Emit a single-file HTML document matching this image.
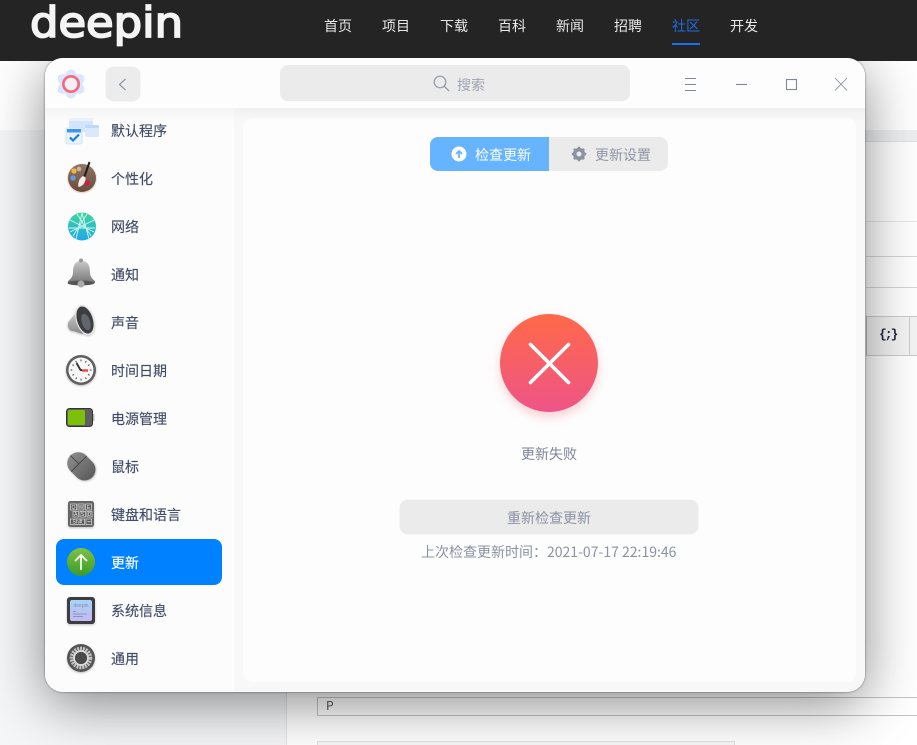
<!DOCTYPE html>
<html><head><meta charset="utf-8"><style>
html,body{margin:0;padding:0;width:917px;height:745px;overflow:hidden;background:#fff;font-family:"Noto Sans CJK SC","Liberation Sans",sans-serif}
div,span,svg{position:absolute}
.nav{top:16px;width:29px;font-size:14px;line-height:20px;color:#e8e8e8;white-space:nowrap}
.it{left:111px;font-size:14px;line-height:20px;color:#414d68;white-space:nowrap;-webkit-text-stroke:.15px #414d68}
</style></head><body>
<div style="position:absolute;left:0;top:0;width:917px;height:745px;overflow:hidden">
<!-- page behind -->
<div style="left:0;top:61px;width:917px;height:69px;background:#fff"></div>
<div style="left:0;top:130px;width:286px;height:615px;background:#f5f6f8;border-right:1px solid #e3e5e8"></div>
<div style="left:287px;top:130px;width:630px;height:11px;background:#eff0f2;border-bottom:1px solid #dfe1e5"></div>
<div style="left:866px;top:221px;width:51px;height:1px;background:#e6e6e6"></div>
<div style="left:866px;top:256px;width:51px;height:1px;background:#d6d6d6"></div>
<div style="left:866px;top:287px;width:51px;height:1px;background:#d6d6d6"></div>
<div style="left:866px;top:316px;width:51px;height:38px;background:#f4f4f4;border-top:1px solid #ccc;border-bottom:1px solid #ccc"></div>
<div style="left:866px;top:316px;width:1px;height:39px;background:#bbb"></div>
<div style="left:909px;top:316px;width:1px;height:39px;background:#ccc"></div>
<div style="left:879px;top:327px;font:bold 13px/16px 'Liberation Mono',monospace;letter-spacing:-2px;color:#1f2a3d">{;}</div>
<div style="left:317px;top:697px;width:600px;height:17px;border:1px solid #c4c4c4;border-right:0;background:#fff"></div>
<div style="left:326px;top:698px;font-size:12px;line-height:15px;color:#555">P</div>
<div style="left:317px;top:741px;width:416px;height:6px;border:1px solid #e0e2e6;background:#f8f8f8"></div>
<!-- shadow -->
<div style="left:45px;top:58px;width:820px;height:634px;border-radius:18px;box-shadow:0 12px 56px rgba(0,0,0,.46),0 0 2px rgba(0,0,0,.5)"></div>
<!-- header -->
<div style="left:0;top:0;width:917px;height:61px;background:#242424"></div>
<svg style="left:0;top:0" width="220" height="61"><text x="30" y="37" font-family="DejaVu Sans" font-size="42" fill="#f4f4f4" stroke="#f4f4f4" stroke-width="1.800" textLength="153" lengthAdjust="spacingAndGlyphs">deepin</text></svg>
<span class="nav" style="left:324px">首页</span><span class="nav" style="left:382px">项目</span><span class="nav" style="left:440px">下载</span><span class="nav" style="left:498px">百科</span><span class="nav" style="left:556px">新闻</span><span class="nav" style="left:614px">招聘</span><span class="nav" style="left:672px;color:#1d6fe0">社区</span><span class="nav" style="left:730px">开发</span>
<div style="left:672px;top:43px;width:28px;height:2px;background:#1a6ff0"></div>
<!-- window -->
<div style="left:45px;top:58px;width:820px;height:634px;border-radius:18px;background:#f8f8f8;overflow:hidden">
 <div style="left:0;top:50px;width:189px;height:584px;background:#fcfcfc"></div>
 <div style="left:198px;top:60px;width:613px;height:564px;background:#fdfdfd;border-radius:10px"></div>
 <div style="left:0;top:50px;width:820px;height:14px;background:linear-gradient(rgba(0,0,0,.03),rgba(0,0,0,0))"></div>
 <div style="left:0;top:0;width:820px;height:50px;background:#fdfdfd"></div>
</div>
<!-- title bar -->
<svg style="left:56px;top:69px" width="30" height="30" viewBox="0 0 30 30"><g fill="#d8e7fb"><circle cx="15" cy="15" r="11.500"/><circle cx="15" cy="5.500" r="5"/><circle cx="15" cy="24.500" r="5"/><circle cx="6.500" cy="10" r="5"/><circle cx="23.500" cy="10" r="5"/><circle cx="6.500" cy="20" r="5"/><circle cx="23.500" cy="20" r="5"/></g><circle cx="15" cy="15" r="8" fill="#f4eff4"/><circle cx="15" cy="15" r="7.700" fill="none" stroke="#f7677f" stroke-width="2.700"/></svg>
<div style="left:106px;top:67px;width:34px;height:34px;background:#ececec;border-radius:8px;box-shadow:0 0 1px rgba(0,0,0,.2)"></div>
<svg style="left:106px;top:67px" width="34" height="34"><path d="M19.500 12L13.500 17.500l6 5.500" fill="none" stroke="#7b8498" stroke-width="1"/></svg>
<div style="left:280px;top:65px;width:350px;height:36px;background:#ebebeb;border-radius:8px"></div>
<svg style="left:432px;top:74px" width="20" height="20"><circle cx="8" cy="8" r="5.800" fill="none" stroke="#9299a8" stroke-width="1.200"/><path d="M12.300 12.300l4.700 4.700" stroke="#9299a8" stroke-width="1.300"/></svg>
<span style="left:457px;top:75px;font-size:14px;line-height:20px;color:#9ea4b2">搜索</span>
<svg style="left:680px;top:74px" width="170" height="20" fill="none" stroke="#7f8798" stroke-width="1"><path d="M5 4.500h11M5 10.500h11M5 16.500h11" stroke-width=".9"/><path d="M56 10.500h11" stroke-width="1.100"/><rect x="106.500" y="5.500" width="10" height="10" stroke-width="1.100"/><path d="M155 4l12 12.500M167 4l-12 12.500" stroke-width=".8"/></svg>
<!-- tabs -->
<div style="left:430px;top:137px;width:119px;height:34px;background:#66b3ff;border-radius:8px 0 0 8px"></div>
<div style="left:549px;top:137px;width:119px;height:34px;background:#ebebeb;border-radius:0 8px 8px 0"></div>
<svg style="left:451px;top:146px" width="16" height="16"><circle cx="8" cy="8" r="7.500" fill="#fff"/><path d="M8 12V5M5 8l3-3 3 3" fill="none" stroke="#66b3ff" stroke-width="1.800"/></svg>
<span style="left:475px;top:145px;font-size:14px;line-height:20px;color:#fff">检查更新</span>
<svg style="left:571px;top:146px" width="16" height="16" viewBox="0 0 16 16"><circle cx="8" cy="8" r="4.300" fill="none" stroke="#8b92a3" stroke-width="3.600"/><path d="M8 .8v3M8 12.200v3M.8 8h3M12.200 8h3M2.900 2.900l2 2M11.100 11.100l2 2M13.100 2.900l-2 2M4.900 11.100l-2 2" stroke="#8b92a3" stroke-width="2.400"/></svg>
<span style="left:595px;top:145px;font-size:14px;line-height:20px;color:#8f96a6">更新设置</span>
<!-- failure -->
<div style="left:500px;top:314px;width:98px;height:98px;border-radius:50%;background:linear-gradient(#ff6948,#ee5488);box-shadow:0 5px 10px rgba(240,80,90,.25)"></div>
<svg style="left:500px;top:314px" width="98" height="98"><path d="M30.500 30.500l38 38M68.500 30.500l-38 38" stroke="#fff" stroke-width="3.600" stroke-linecap="round"/></svg>
<span style="left:521px;top:444px;font-size:14px;line-height:20px;color:#7d8596">更新失败</span>
<div style="left:400px;top:500px;width:298px;height:34px;background:#ebebeb;border-radius:8px;box-shadow:0 0 1px rgba(0,0,0,.2)"></div>
<span style="left:507px;top:508px;font-size:14px;line-height:20px;color:#8a92a3">重新检查更新</span>
<span style="left:421px;top:542px;font-size:14px;line-height:20px;color:#8a92a3;white-space:nowrap">上次检查更新时间：2021-07-17 22:19:46</span>
<!-- sidebar -->
<div style="left:56px;top:539px;width:166px;height:46px;background:#0081ff;border-radius:8px"></div>
<span class="it" style="top:121px">默认程序</span>
<span class="it" style="top:169px">个性化</span>
<span class="it" style="top:217px">网络</span>
<span class="it" style="top:265px">通知</span>
<span class="it" style="top:313px">声音</span>
<span class="it" style="top:361px">时间日期</span>
<span class="it" style="top:409px">电源管理</span>
<span class="it" style="top:457px">鼠标</span>
<span class="it" style="top:505px">键盘和语言</span>
<span class="it" style="top:553px;color:#fff;-webkit-text-stroke:.15px #fff">更新</span>
<span class="it" style="top:601px">系统信息</span>
<span class="it" style="top:649px">通用</span>
<svg style="left:60px;top:112px" width="44" height="570" viewBox="0 0 44 570">
 <defs>
  <linearGradient id="g1" x1="0" y1="0" x2="0" y2="1"><stop offset="0" stop-color="#3fd69a"/><stop offset="1" stop-color="#1fa8e8"/></linearGradient>
  <linearGradient id="g2" x1="0" y1="0" x2="0" y2="1"><stop offset="0" stop-color="#c8c8c8"/><stop offset="1" stop-color="#777"/></linearGradient>
  <linearGradient id="g3" x1="0" y1="0" x2="0" y2="1"><stop offset="0" stop-color="#7fc241"/><stop offset="1" stop-color="#3b9a2a"/></linearGradient>
  <linearGradient id="g4" x1="0" y1="0" x2="0" y2="1"><stop offset="0" stop-color="#a5d4f5"/><stop offset="1" stop-color="#c6b9f2"/></linearGradient>
  <linearGradient id="g5" x1="0" y1="0" x2="0" y2="1"><stop offset="0" stop-color="#8a8a8a"/><stop offset="1" stop-color="#5c5c5c"/></linearGradient>
  <linearGradient id="g6" x1="0" y1="0" x2="0" y2="1"><stop offset="0" stop-color="#8f7665"/><stop offset="1" stop-color="#6b4a3a"/></linearGradient>
  <linearGradient id="g7" x1="0" y1="0" x2="0" y2="1"><stop offset="0" stop-color="#d8d8d8"/><stop offset="1" stop-color="#888"/></linearGradient>
  <filter id="sh" x="-20%" y="-20%" width="140%" height="150%"><feDropShadow dx="0" dy="1" stdDeviation="1" flood-color="#000" flood-opacity=".25"/></filter>
 </defs>
 <!-- default apps -->
 <rect x="9" y="6" width="24" height="14" rx="1.500" fill="#d2e5fb"/><rect x="9" y="6" width="24" height="3" fill="#e8f1fc"/>
 <rect x="25" y="13" width="14" height="12" rx="2" fill="#d9e9fb"/><rect x="25" y="13" width="14" height="3" rx="1" fill="#bcd9f8"/>
 <rect x="6" y="16" width="16" height="16" rx="2" fill="#eaf3fd" stroke="#d0e3fa"/><rect x="7" y="17" width="14" height="3.500" fill="#3d97f0"/>
 <path d="M10 25.500l3 3 6-6" fill="none" stroke="#1a7ae6" stroke-width="2.200"/>
 <!-- palette -->
 <circle cx="22" cy="66.500" r="15" fill="#e8c8b8" opacity=".6"/><circle cx="22" cy="66" r="14" fill="url(#g6)"/>
 <circle cx="14" cy="59" r="2.700" fill="#f0b53c"/><circle cx="13" cy="66" r="2.700" fill="#5b9fe0"/><circle cx="19" cy="57" r="2.300" fill="#c9b5a5"/><circle cx="27" cy="71" r="2.500" fill="#d8143f"/>
 <path d="M18.500 75c-1-4 1-9 4.500-11l2.500 1.500c.5 4-2 8.500-7 9.500z" fill="#f4efe8"/><path d="M24.500 64.500L29.500 50" stroke="#1d1d1d" stroke-width="2"/>
 <!-- network -->
 <circle cx="22" cy="114.500" r="14" fill="url(#g1)"/><path d="M22 101l-6 26M22 101l7 26M10 108l24 12M34 108l-24 12M9 116h26M13 124l14-22M31 124L17 102" stroke="#e8fff6" stroke-width=".9" fill="none" opacity=".9"/>
 <!-- bell -->
 <path d="M21 149c-6 0-8 5-8 11 0 4-2 7-5 9v2h27v-2c-3-2-5-5-5-9 0-6-2-11-8-11z" fill="url(#g2)"/><circle cx="21" cy="148.500" r="2" fill="#999"/><ellipse cx="21" cy="171" rx="13.500" ry="2.500" fill="#555"/><circle cx="21" cy="172" r="3.500" fill="#aaa"/>
 <!-- speaker -->
 <g filter="url(#sh)"><path d="M19 197L10 208a5 6 0 0 0 3 11l10 3z" fill="url(#g7)"/><ellipse cx="25" cy="208" rx="9" ry="15.500" transform="rotate(-18 25 208)" fill="#e2e2e2"/><ellipse cx="25" cy="208" rx="7.800" ry="14" transform="rotate(-18 25 208)" fill="#3a3d40"/><ellipse cx="26" cy="210" rx="4.200" ry="8.500" transform="rotate(-18 26 210)" fill="#62666b"/></g>
 <!-- clock -->
 <g filter="url(#sh)"><circle cx="21" cy="258" r="15" fill="#5e5e5e"/><circle cx="21" cy="258" r="12.500" fill="#f7f7f7"/></g>
 <path d="M21 247.500v1.800M21 266.700v1.800M10.500 258h1.800M29.700 258h1.800M15.700 249l.9 1.500M26.300 249l-.9 1.500M15.700 267l.9-1.500M26.300 267l-.9-1.500M12.500 252.700l1.500.9M29.500 252.700l-1.500.9M12.500 263.300l1.500-.9M29.500 263.300l-1.500-.9" stroke="#444" stroke-width="1"/>
 <path d="M16.500 251l4 7" stroke="#333" stroke-width="1.800"/><path d="M20 258h2" stroke="#333" stroke-width="2"/><path d="M22 258.500h6" stroke="#ee4444" stroke-width="2.400"/>
 <!-- battery -->
 <rect x="6.500" y="296.500" width="26" height="18" rx="3" fill="#5f5f5f" stroke="#333"/><rect x="8" y="298" width="17" height="15" rx="1.500" fill="#7cc00a"/><rect x="33" y="302" width="1.500" height="7" fill="#bbb"/>
 <!-- mouse -->
 <g transform="rotate(-45 21 354)" filter="url(#sh)"><rect x="10" y="339" width="22" height="31" rx="11" fill="url(#g5)"/><path d="M10 351h22M21 339v12" stroke="#444" stroke-width="1"/></g>
 <!-- keyboard -->
 <rect x="8" y="389" width="26" height="26" rx="2.500" fill="#666" filter="url(#sh)"/>
 <g fill="#5a5a5a" stroke="#ddd" stroke-width=".7"><rect x="10.500" y="392" width="6" height="6"/><rect x="18" y="392" width="6" height="6"/><rect x="25.500" y="392" width="6" height="6"/><rect x="13" y="399.500" width="5.500" height="5.500"/><rect x="20" y="399.500" width="5.500" height="5.500"/><rect x="27" y="399.500" width="5" height="5.500"/><rect x="10.500" y="407" width="14" height="5.500"/><rect x="26" y="407" width="5.500" height="5.500"/></g>
 <g font-family="Liberation Sans" font-size="5" fill="#eee" text-anchor="middle"><text x="13.500" y="397">Q</text><text x="21" y="397">W</text><text x="28.500" y="397">E</text><text x="15.700" y="404">A</text><text x="22.700" y="404">S</text><text x="29.500" y="404">D</text><text x="17.500" y="411.500">Shift</text></g>
 <path d="M27.500 409.700h3" stroke="#eee" stroke-width=".8"/>
 <!-- update -->
 <circle cx="21" cy="450" r="14" fill="url(#g3)"/><path d="M21 458v-15M15 449l6-6 6 6" fill="none" stroke="#fff" stroke-width="1.700"/>
 <!-- sysinfo -->
 <rect x="7" y="485" width="28" height="27" rx="3" fill="#3c3c3c" filter="url(#sh)"/><rect x="10" y="488" width="22" height="21" rx="2" fill="url(#g4)"/><path d="M13 499.500h3M13 502h14M13 504.500h10" stroke="#7a86b8" stroke-width=".8"/><text x="21" y="495" font-family="Liberation Sans" font-size="5" fill="#7e8cb0" text-anchor="middle">deepin</text>
 <!-- general -->
 <circle cx="21" cy="546" r="14" fill="#555" filter="url(#sh)"/><circle cx="21" cy="546" r="9.500" fill="none" stroke="#c4c4c4" stroke-width="3.500" stroke-dasharray="2 .9"/><circle cx="21" cy="546" r="7" fill="none" stroke="#d8d8d8" stroke-width="2"/><circle cx="21" cy="546" r="6" fill="#4a4a4a"/>
</svg>
</div>
</body></html>
